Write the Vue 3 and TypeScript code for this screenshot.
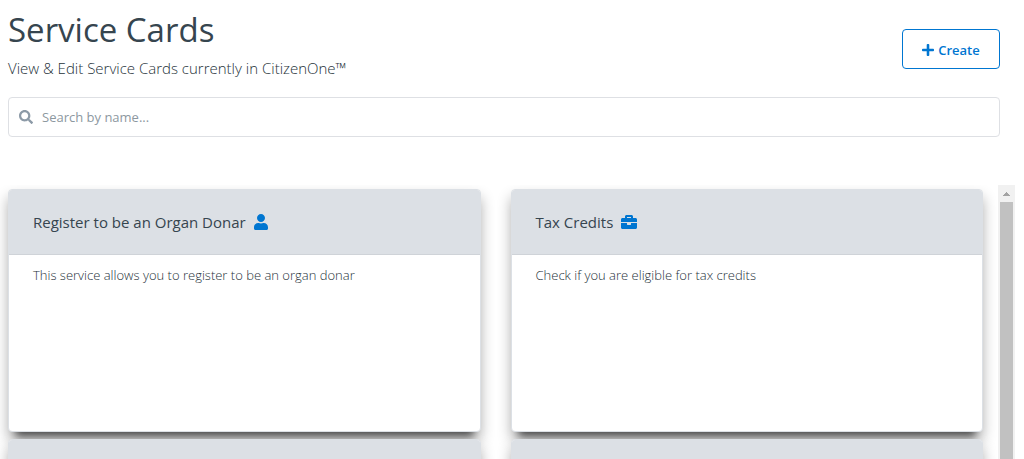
<script setup lang="ts">
import { computed, ref } from 'vue'

type IconName = 'user' | 'briefcase'

interface ServiceCard {
  id: number
  title: string
  icon: IconName | null
  description: string
}

const query = ref('')

const cards: ServiceCard[] = [
  {
    id: 1,
    title: 'Register to be an Organ Donar',
    icon: 'user',
    description: 'This service allows you to register to be an organ donar',
  },
  {
    id: 2,
    title: 'Tax Credits',
    icon: 'briefcase',
    description: 'Check if you are eligible for tax credits',
  },
  { id: 3, title: '', icon: null, description: '' },
  { id: 4, title: '', icon: null, description: '' },
]

const icons: Record<IconName, { viewBox: string; path: string }> = {
  user: {
    viewBox: '0 0 448 512',
    path: 'M224 256c70.700 0 128-57.300 128-128S294.700 0 224 0 96 57.300 96 128s57.300 128 128 128zm89.600 32h-16.700c-22.200 10.200-46.900 16-72.900 16s-50.600-5.800-72.900-16h-16.700C60.200 288 0 348.200 0 422.400V464c0 26.500 21.500 48 48 48h352c26.500 0 48-21.500 48-48v-41.600c0-74.200-60.200-134.400-134.400-134.400z',
  },
  briefcase: {
    viewBox: '0 0 512 512',
    path: 'M320 336c0 8.840-7.160 16-16 16h-96c-8.840 0-16-7.160-16-16v-48H0v144c0 25.600 22.400 48 48 48h416c25.600 0 48-22.400 48-48V288H320v48zm144-208h-80V80c0-25.600-22.400-48-48-48H176c-25.600 0-48 22.400-48 48v48H48c-25.600 0-48 22.400-48 48v80h512v-80c0-25.600-22.400-48-48-48zm-144 0H192V96h128v32z',
  },
}

const visibleCards = computed(() => {
  const needle = query.value.trim().toLowerCase()
  return needle ? cards.filter((c) => c.title.toLowerCase().includes(needle)) : cards
})
</script>

<template>
  <main class="page">
    <header class="header">
      <div>
        <h1 class="title">Service Cards</h1>
        <p class="subtitle">View &amp; Edit Service Cards currently in CitizenOne™</p>
      </div>
      <button class="create" type="button">
        <svg class="plus" viewBox="0 0 448 512" aria-hidden="true">
          <path d="M416 208H272V64c0-17.670-14.330-32-32-32h-32c-17.670 0-32 14.330-32 32v144H32c-17.670 0-32 14.330-32 32v32c0 17.670 14.330 32 32 32h144v144c0 17.670 14.330 32 32 32h32c17.670 0 32-14.330 32-32V304h144c17.670 0 32-14.330 32-32v-32c0-17.670-14.330-32-32-32z" />
        </svg>
        Create
      </button>
    </header>

    <label class="search">
      <svg class="search-icon" viewBox="0 0 512 512" aria-hidden="true">
        <path d="M505 442.700L405.300 343c-4.500-4.500-10.600-7-17-7H372c27.600-35.300 44-79.700 44-128C416 93.100 322.900 0 208 0S0 93.100 0 208s93.100 208 208 208c48.300 0 92.700-16.400 128-44v16.300c0 6.400 2.500 12.500 7 17l99.700 99.700c9.400 9.400 24.600 9.400 33.900 0l28.300-28.300c9.400-9.400 9.400-24.600.1-34zM208 336c-70.700 0-128-57.200-128-128 0-70.700 57.200-128 128-128 70.700 0 128 57.200 128 128 0 70.700-57.200 128-128 128z" />
      </svg>
      <input v-model="query" class="search-input" type="text" placeholder="Search by name..." aria-label="Search by name" />
    </label>

    <div class="viewport">
      <section class="cards">
        <article v-for="card in visibleCards" :key="card.id" class="card">
          <div class="card-head">
            <h2 v-if="card.title" class="card-title">{{ card.title }}</h2>
            <svg v-if="card.icon" class="card-icon" :viewBox="icons[card.icon].viewBox" aria-hidden="true">
              <path :d="icons[card.icon].path" />
            </svg>
          </div>
          <p class="card-text">{{ card.description }}</p>
        </article>
      </section>
      <div class="scrollbar" aria-hidden="true">
        <svg class="arrow" viewBox="0 0 17 17">
          <path d="M5 11h7v-1h-1v-1h-1v-1h-1v-1h-1v1h-1v1h-1v1h-1z" />
        </svg>
        <div class="thumb"></div>
      </div>
    </div>
  </main>
</template>

<style>
html,
body,
#app {
  height: 100%;
}

body {
  margin: 0;
  overflow: hidden;
}
</style>

<style scoped>
* {
  box-sizing: border-box;
}

.page {
  height: 100%;
  display: flex;
  flex-direction: column;
  padding: 8px 9px 0 8px;
  background: #fff;
  color: #36454f;
  font-family: "Segoe UI", "Open Sans", "Noto Sans", sans-serif;
}

.header {
  display: flex;
  justify-content: space-between;
  align-items: center;
  padding-right: 15px;
}

.title {
  margin: 0;
  font-size: 33px;
  line-height: 44px;
  font-weight: 400;
}

.subtitle {
  margin: 4px 0 0;
  color: #26323a;
  font-size: 15px;
  line-height: 24px;
  font-weight: 300;
}

.create {
  display: flex;
  align-items: center;
  justify-content: center;
  gap: 4px;
  width: 98px;
  height: 40px;
  margin-top: 10px;
  padding: 1px 0 0;
  border: 1px solid #0076d1;
  border-radius: 4px;
  background: #fff;
  color: #0076d1;
  font: inherit;
  font-size: 13px;
  font-weight: 600;
}

.plus {
  width: 12px;
  height: 14px;
  fill: currentColor;
}

.search {
  flex: none;
  display: flex;
  align-items: center;
  gap: 9px;
  height: 40px;
  margin: 17px 15px 0 0;
  padding: 0 10px;
  border: 1px solid #dee0e4;
  border-radius: 4px;
}

.search-icon {
  width: 14px;
  height: 14px;
  fill: #8c9aa7;
}

.search-input {
  flex: 1;
  min-width: 0;
  padding: 0;
  border: 0;
  outline: 0;
  background: transparent;
  color: inherit;
  font: inherit;
  font-size: 13px;
}

.search-input::placeholder {
  color: #8d989f;
  opacity: 1;
}

.viewport {
  flex: 1;
  min-height: 0;
  display: flex;
  gap: 15px;
  margin: 48px 0 0 -8px;
  overflow: hidden;
}

.cards {
  flex: 1;
  display: grid;
  grid-template-columns: repeat(2, minmax(0, 1fr));
  align-content: start;
  gap: 7px 30px;
  padding: 4px 0 0 8px;
}

.card {
  min-height: 243px;
  border: 1px solid #dce0e5;
  border-radius: 4px;
  background: #fff;
  box-shadow:
    0 12px 8px -8px rgba(0, 0, 0, 0.6),
    0 8px 14px rgba(0, 0, 0, 0.3);
}

.card-head {
  display: flex;
  align-items: center;
  gap: 8px;
  height: 65px;
  padding: 0 24px;
  border-bottom: 1px solid #cfd3d8;
  border-radius: 3px 3px 0 0;
  background: #dce0e5;
}

.card-title {
  margin: 0;
  font-size: 15px;
  line-height: 24px;
  font-weight: 400;
}

.card-icon {
  height: 16px;
  fill: #0076d1;
}

.card-text {
  margin: 10px 24px;
  color: #26323a;
  font-size: 13px;
  line-height: 20px;
  font-weight: 300;
}

.scrollbar {
  flex: none;
  width: 17px;
  display: flex;
  flex-direction: column;
  background: #f1f1f1;
}

.arrow {
  flex: none;
  width: 17px;
  height: 17px;
  fill: #a3a3a3;
}

.thumb {
  flex: 1;
  margin: 0 2px;
  background: #c1c1c1;
}
</style>
